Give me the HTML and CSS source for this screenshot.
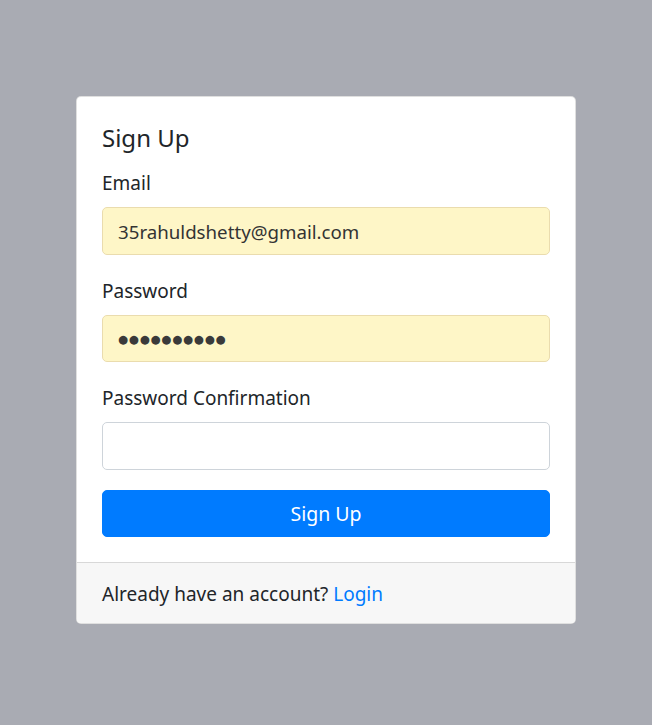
FILE: index.html
```html
<!DOCTYPE html>
<html lang="en">
<head>
<meta charset="utf-8">
<title>Sign Up</title>
<link rel="stylesheet" href="styles.css">
</head>
<body>
<div class="page">
  <div class="card">
    <div class="card-body">
      <h2 class="card-title">Sign Up</h2>
      <form class="form">
        <div class="form-group">
          <label class="label" for="email">Email</label>
          <input class="input autofill" id="email" type="email" value="35rahuldshetty@gmail.com">
        </div>
        <div class="form-group">
          <label class="label" for="password">Password</label>
          <input class="input autofill dots" id="password" type="text" value="●●●●●●●●●●">
        </div>
        <div class="form-group">
          <label class="label" for="confirm">Password Confirmation</label>
          <input class="input" id="confirm" type="password">
        </div>
        <button class="btn" type="button">Sign Up</button>
      </form>
    </div>
    <div class="card-footer">Already have an account? <a class="link" href="#">Login</a></div>
  </div>
</div>
</body>
</html>
```

FILE: styles.css
```css
* { box-sizing: border-box; }
html, body { margin: 0; padding: 0; }
body {
  background: #a9abb3;
  font-family: "Noto Sans", "Open Sans", sans-serif;
  font-size: 19px;
  line-height: 30px;
  color: #212529;
}
.page {
  display: flex;
  justify-content: center;
  padding-top: 96px;
  min-height: 725px;
}
.card {
  width: 500px;
  background: #fff;
  border: 1px solid rgba(0,0,0,0.125);
  border-radius: 5px;
  display: flex;
  flex-direction: column;
  height: 528px;
  overflow: hidden;
}
.card-body {
  padding: 26px 25px 25px;
  flex: 1;
}
.card-title {
  margin: 0 0 15px;
  font-size: 24px;
  font-weight: 400;
  line-height: 29px;
}
.form { margin: 0; }
.form-group { margin-bottom: 20px; }
.label {
  display: block;
  margin-bottom: 9px;
  padding-top: 1px;
}
.input {
  display: block;
  width: 100%;
  height: 47.5px;
  padding: 8px 15px 7px;
  font-family: inherit;
  font-size: 18.7px;
  line-height: 30px;
  color: #495057;
  background: #fff;
  border: 1px solid #ced4da;
  border-radius: 5px;
  outline: none;
}
.autofill {
  background: #fef6c7;
  border-color: #eadcae;
  color: #333;
}
.dots {
  font-family: "DejaVu Sans", sans-serif;
  font-size: 11.5px;
  letter-spacing: 0.8px;
  color: #3a3a3a;
}
.btn {
  display: block;
  width: 100%;
  height: 47.5px;
  padding: 8px 15px 7px;
  font-family: inherit;
  font-size: 19.5px;
  line-height: 30px;
  color: #fff;
  background: #007bff;
  border: 1px solid #007bff;
  border-radius: 5px;
  cursor: pointer;
}
.card-footer {
  padding: 16px 25px 14px;
  background: #f7f7f7;
  border-top: 1px solid rgba(0,0,0,0.125);
}
.link {
  color: #007bff;
  text-decoration: none;
}
```
